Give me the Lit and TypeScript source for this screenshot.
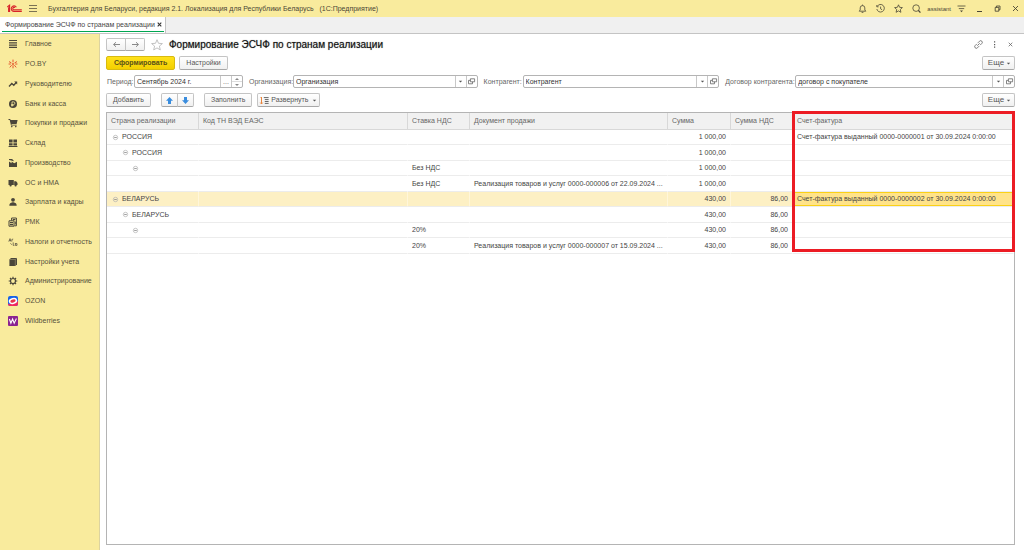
import { LitElement, html, svg, css, nothing } from "lit";
import { customElement, property } from "lit/decorators.js";

const icons: Record<string, unknown> = {
  logo: svg`<g fill="none" stroke="#d8232a" stroke-width="1.1"><path d="M.3 3 2.6 1.2V8M1.6 3.2V8" /><path d="M9.4 3.2A2.8 2.8 0 1 0 6.8 7.5H14.8M8 3.7A1.3 1.3 0 1 0 6.8 5.9H14.8" /></g>`,
  menu: svg`<path d="M0 1.5h8M0 4.5h8M0 7.5h8" stroke="#7a7254" stroke-width="1" />`,
  bell: svg`<path d="M1.2 7.2 2.2 6V3.9a2.3 2.3 0 0 1 4.6 0V6l1 1.2zM4.5 1.6V.6M3.6 8.4h1.8" fill="none" stroke="#4a4636" stroke-width=".8" />`,
  history: svg`<path d="M1.2 2.4A3.8 3.8 0 1 1 .8 5M.8 1v1.8h1.8M4.6 2.6v2.2l1.5 1" fill="none" stroke="#4a4636" stroke-width=".8" />`,
  star: svg`<path d="M4.5.8 5.6 3.3l2.8.3-2.1 1.9.6 2.8-2.4-1.4-2.4 1.4.6-2.8L.6 3.6l2.8-.3z" fill="none" stroke="#4a4636" stroke-width=".8" />`,
  search: svg`<circle cx="4.1" cy="4.1" r="3.3" fill="none" stroke="#4a4636" stroke-width=".8" /><path d="M6.4 6.4 8.4 8.6" stroke="#4a4636" stroke-width="1.3" />`,
  filter: svg`<path d="M.5 2h8M1.8 4.6h5.4" stroke="#4a4636" stroke-width=".8" /><path d="M3 6.6h3L4.5 8.2z" fill="#4a4636" />`,
  minimize: svg`<path d="M2 7.5h5" stroke="#4a4636" stroke-width="1" />`,
  restore: svg`<path d="M2.2 3.4h3.6v3.8H2.2zM3.4 3.4V2H7v3.8H5.8" fill="none" stroke="#3d3a2d" stroke-width=".8" />`,
  close: svg`<path d="m2 2 5 5M7 2 2 7" stroke="#4a4636" stroke-width=".9" />`,
  closeBold: svg`<path d="m2.7 2.7 3.6 3.6M6.3 2.7 2.7 6.3" stroke="#333" stroke-width="1.1" />`,
  closeSmall: svg`<path d="m2.7 2.7 3.6 3.6M6.3 2.7 2.7 6.3" stroke="#666" stroke-width=".8" />`,
  link: svg`<g transform="rotate(-45 4.5 4.5)" fill="none" stroke="#666" stroke-width=".8"><path d="M3.8 2.9H1.4a1.6 1.6 0 0 0 0 3.2h2.4M5.2 2.9h2.4a1.6 1.6 0 0 1 0 3.2H5.2M2.8 4.5h3.4" /></g>`,
  dots: svg`<path d="M4 1.3h1.2v1.3H4zM4 3.9h1.2v1.3H4zM4 6.5h1.2v1.3H4z" fill="#555" />`,
  left: svg`<path d="M8 4.5H1.6M4 2.2 1.6 4.5 4 6.8" fill="none" stroke="#888" stroke-width="1" />`,
  right: svg`<path d="M1 4.5h6.4M5 2.2l2.4 2.3L5 6.8" fill="none" stroke="#888" stroke-width="1" />`,
  favorite: svg`<path d="M6 .7 7.5 4.3l3.9.3-3 2.5.9 3.8L6 8.9l-3.3 2 .9-3.8-3-2.5 3.9-.3z" fill="none" stroke="#b4b4b4" stroke-width=".8" />`,
  up: svg`<path d="M4.5 1 8 4.7H6V8H3V4.7H1z" fill="#3a8dde" />`,
  down: svg`<path d="M4.5 8 1 4.3h2V1h3v3.3h2z" fill="#3a8dde" />`,
  expand: svg`<path d="M1.5 1v7M.3 6.6 1.5 8l1.2-1.4M.6 2 1.5 1" stroke="#e8843c" stroke-width="1" fill="none" /><path d="M3.8 1.6h4.8M4.8 3.6h3.8M4.8 5.5h3.8M4.8 7.4h3.8" stroke="#666" stroke-width="1" />`,
  caret: svg`<path d="M2.8 3.7h3.4L4.5 5.6z" fill="#555" />`,
  open: svg`<path d="M3.4 1.8h4.2v3H3.4zM3.4 3.4H1.5v3.4h4V4.8" fill="none" stroke="#666" stroke-width=".8" />`,
  minus: svg`<circle cx="4.5" cy="4.5" r="2.2" fill="none" stroke="#b0b0b0" stroke-width=".7" /><path d="M3.2 4.5h2.6" stroke="#888" stroke-width=".8" />`,
  main: svg`<path d="M1 1.5h8M1 3.8h8M1 6.1h8M1 8.4h8" stroke="#4a463a" stroke-width="1.2" />`,
  poby: svg`<path d="M5 .6v2.7M5 6.3v3M1 2.6l2.4 1.3M6.6 3.9 9 2.6M.6 5h2.2M7.2 5h2.2M3.6 6.2 1.8 8.4M6.4 6.2l1.8 2.2" stroke="#e4572e" stroke-width="1" /><circle cx="5" cy="5" r="1" fill="#e4572e" />`,
  trend: svg`<path d="m1 7.5 2.8-3 2 1.8 2.6-3" fill="none" stroke="#4a463a" stroke-width="1.3" /><path d="M6.2 2.4h3v3z" fill="#4a463a" />`,
  bank: svg`<circle cx="5" cy="5" r="4" fill="#4a463a" /><path d="M4 7.6V2.9h1.6a1.3 1.3 0 0 1 0 2.6H3.2M3.2 6.5h2.4" fill="none" stroke="#f9eb9d" stroke-width=".8" />`,
  cart: svg`<path d="M.5 1h1.7l.4 1h7L8.6 6H3.4l.3.8h5v.8H3L1.7 1.9H.5z" fill="#4a463a" /><circle cx="3.8" cy="8.6" r=".8" fill="#4a463a" /><circle cx="7.8" cy="8.6" r=".8" fill="#4a463a" />`,
  store: svg`<path d="M1 1.4h3.6v3H1zM5.4 1.4H9v3H5.4zM1 5.2h3.6v2.4H1zM5.4 5.2H9v2.4H5.4zM.6 8h8.8v.9H.6z" fill="#4a463a" />`,
  factory: svg`<path d="M1 9V3.4l2.6 1.8V3.6l2.6 1.6L9 3.8V9zM1 2V.9h3.6V2l1 .2v1L3.2 2.4z" fill="#4a463a" />`,
  truck: svg`<path d="M.5 2h5.3v5H.5zM6.2 3.2h1.9L9.5 5v2H6.2z" fill="#4a463a" /><circle cx="2.6" cy="7.5" r="1.1" fill="#4a463a" /><circle cx="7.6" cy="7.5" r="1.1" fill="#4a463a" />`,
  person: svg`<circle cx="5" cy="2.8" r="1.9" fill="#4a463a" /><path d="M1.3 8.8c0-2.4 1.3-3.1 3.1-3.5h1.2c1.8.4 3.1 1.1 3.1 3.5z" fill="#4a463a" />`,
  pos: svg`<path d="M1 3.8h5v5.4H1zM3.6 3.6V1h4.8v7.8H6.4" fill="none" stroke="#4a463a" stroke-width="1" /><path d="M2 5h3v1H2zM2 6.8h3v1.4H2zM4.8 2h2.6v1.3H4.8zM6.8 4.4h1v3h-1z" fill="#4a463a" />`,
  tax: svg`<path d="m.8 4.6 1.2-3 1 3M1.2 3.6h1.6M3.9 4.4v-2l1.3-.3M5.2 5.4v3h1.2M7.4 6v2.4H9V6.6H7.4M2.4 6.4l1.4 1.2" fill="none" stroke="#5c5644" stroke-width=".8" />`,
  books: svg`<path d="M1.4 2.4 3 .9h6v6.3L7.4 9h-6z" fill="#4a463a" /><path d="M1.6 2.5h5.7V9M7.3 2.5 8.9 1" fill="none" stroke="#a39b74" stroke-width=".6" />`,
  gear: svg`<circle cx="5" cy="5" r="2.5" fill="none" stroke="#4a463a" stroke-width="1.2" /><path d="M5 .7v1.6M5 7.7v1.6M.7 5h1.6M7.7 5h1.6M2 2l1 1M7 7l1 1M2 8l1-1M7 3l1-1" stroke="#4a463a" stroke-width="1.2" />`,
  ozon: svg`<rect width="10" height="10" rx="2" fill="#1762e8" /><path d="M0 7.4C3 9 8 7 10 5v3a2 2 0 0 1-2 2H2a2 2 0 0 1-2-2z" fill="#f0285f" /><ellipse cx="5" cy="5" rx="4.3" ry="3" transform="rotate(-14 5 5)" fill="#fff" /><ellipse cx="5" cy="5" rx="2.7" ry="1.5" transform="rotate(-14 5 5)" fill="#e8334a" />`,
  wb: svg`<rect width="10" height="10" rx="1" fill="#8b2391" /><path d="m1.4 3 1.5 4.2L4.6 3l1.6 4.2L8.4 2.6" fill="none" stroke="#fff" stroke-width="1.1" />`,
};

const boxes: Record<string, string> = { logo: "0 0 15 9", favorite: "0 0 12 12" };
const wide = ["main", "poby", "trend", "bank", "cart", "store", "factory", "truck", "person", "pos", "tax", "books", "gear", "ozon", "wb"];

const icon = (name: string) => html`<svg
  class="icon i-${name}"
  viewBox=${boxes[name] ?? (wide.includes(name) ? "0 0 10 10" : "0 0 9 9")}
  aria-hidden="true"
>${icons[name]}</svg>`;

const shared = css`
  :host { display: block; }
  * { box-sizing: border-box; }
  .icon { display: block; width: 9px; height: 9px; flex: none; overflow: visible; }
  .i-logo { width: 15px; }
  .i-favorite { width: 12px; height: 12px; }
  button, input {
    font: inherit;
    color: inherit;
    margin: 0;
    padding: 0;
    border: 0;
    background: none;
  }
  button { display: flex; align-items: center; justify-content: center; white-space: nowrap; }
`;

@customElement("lookup-field")
class LookupField extends LitElement {
  @property() label = "";
  @property() value = "";
  @property() kind = "lookup";

  static styles = [shared, css`
    :host { display: contents; }
    .label { color: #666; white-space: nowrap; padding-left: 6px; }
    .label.period { padding-left: 1px; }
    .box {
      display: flex;
      height: 13px;
      min-width: 0;
      border: 1px solid #b4b4b4;
      border-radius: 2px;
      background: #fff;
      color: #333;
    }
    .input { flex: 1; min-width: 0; padding-left: 2px; outline: 0; }
    .part { width: 11px; border-left: 1px solid #c8c8c8; color: #666; }
    .spin .step { height: 5px; width: 10px; }
    .spin .step + .step { height: 6px; border-top: 1px solid #ddd; }
  `];

  render() {
    return html`
      <label class="label ${this.kind}" for="field">${this.label}</label>
      <div class="box">
        <input class="input" id="field" .value=${this.value} />
        ${this.kind === "period"
          ? html`<button class="part" aria-label="Выбрать период">...</button>
              <div class="part spin">
                <button class="step" aria-label="Больше"><svg width="4" height="2" viewBox="0 0 4 2"><path d="M0 2h4L2 0z" fill="#888" /></svg></button>
                <button class="step" aria-label="Меньше"><svg width="4" height="2" viewBox="0 0 4 2"><path d="M0 0h4L2 2z" fill="#888" /></svg></button>
              </div>`
          : html`<button class="part" aria-label="Список">${icon("caret")}</button>
              <button class="part" aria-label="Открыть">${icon("open")}</button>`}
      </div>`;
  }
}

const sections = [
  ["main", "Главное"], ["poby", "PO.BY"], ["trend", "Руководителю"], ["bank", "Банк и касса"],
  ["cart", "Покупки и продажи"], ["store", "Склад"], ["factory", "Производство"], ["truck", "ОС и НМА"],
  ["person", "Зарплата и кадры"], ["pos", "РМК"], ["tax", "Налоги и отчетность"],
  ["books", "Настройки учета"], ["gear", "Администрирование"], ["ozon", "OZON"], ["wb", "Wildberries"],
];

const columns = ["Страна реализации", "Код ТН ВЭД ЕАЭС", "Ставка НДС", "Документ продажи", "Сумма", "Сумма НДС", "Счет-фактура"];

interface Row {
  level: number;
  country?: string;
  rate?: string;
  doc?: string;
  sum: string;
  vat?: string;
  invoice?: string;
  selected?: boolean;
}

const rows: Row[] = [
  { level: 1, country: "РОССИЯ", sum: "1 000,00", invoice: "Счет-фактура выданный 0000-0000001 от 30.09.2024 0:00:00" },
  { level: 2, country: "РОССИЯ", sum: "1 000,00" },
  { level: 3, rate: "Без НДС", sum: "1 000,00" },
  { level: 0, rate: "Без НДС", doc: "Реализация товаров и услуг 0000-000006 от 22.09.2024 ...", sum: "1 000,00" },
  { level: 1, country: "БЕЛАРУСЬ", sum: "430,00", vat: "86,00", invoice: "Счет-фактура выданный 0000-0000002 от 30.09.2024 0:00:00", selected: true },
  { level: 2, country: "БЕЛАРУСЬ", sum: "430,00", vat: "86,00" },
  { level: 3, rate: "20%", sum: "430,00", vat: "86,00" },
  { level: 0, rate: "20%", doc: "Реализация товаров и услуг 0000-000007 от 15.09.2024 ...", sum: "430,00", vat: "86,00" },
];

@customElement("app-root")
class AppRoot extends LitElement {
  static styles = [shared, css`
    :host {
      display: flex;
      flex-direction: column;
      height: 100vh;
      font: 7px/10px "Liberation Sans", Arial, sans-serif;
      color: #444;
      background: #fff;
    }
    .titlebar {
      display: flex;
      align-items: center;
      height: 17px;
      padding: 0 4px 0 7px;
      background: #f9eb9d;
      color: #4a4636;
    }
    .apptitle { margin-left: 10px; flex: 1; white-space: pre; }
    .menu { margin-left: 7px; }
    .tools { display: flex; align-items: center; gap: 9px; }
    .user { font-size: 6px; margin: 0 -3px; }
    .tabs { display: flex; height: 17px; background: #f0f0f0; border-bottom: 1px solid #c4c4c4; }
    .tab {
      display: flex;
      align-items: flex-start;
      padding: 0 1px 0 2px;
      background: #fff;
      border-right: 1px solid #c4c4c4;
    }
    .tabname {
      display: flex;
      align-items: center;
      height: 15px;
      padding: 1px 0 0 3px;
      border-bottom: 1px solid #00a651;
    }
    .body { display: flex; flex: 1; min-height: 0; }
    .nav { flex: none; width: 100px; background: #f9eb9d; border-right: 1px solid #dcd3a0; }
    .list { list-style: none; margin: 0; padding: 0; }
    .item { height: 20px; }
    .item:nth-child(4n) { height: 19px; }
    .section {
      display: flex;
      align-items: center;
      gap: 7px;
      height: 100%;
      padding-left: 8px;
      color: #57513c;
      text-decoration: none;
      white-space: nowrap;
    }
    .section .icon { width: 10px; height: 10px; }
    .page {
      flex: 1;
      min-width: 0;
      display: flex;
      flex-direction: column;
      gap: 5px;
      padding: 4px 9px 5px 6px;
    }
    .row { display: flex; align-items: center; height: 14px; }
    .top { height: 13px; }
    .top .btn { height: 13px; }
    .btn {
      height: 14px;
      padding: 0 6px;
      border: 1px solid #c4c4c4;
      border-bottom-color: #a8a8a8;
      border-radius: 2px;
      background: linear-gradient(#fff, #f0f0f0);
      color: #555;
    }
    .primary {
      padding: 0 7px;
      margin-right: 4px;
      background: linear-gradient(#ffe11a, #f3cf00);
      border-color: #d8ba10;
      color: #5a5018;
      font-weight: bold;
    }
    .pair { display: flex; }
    .pair .btn { width: 20px; padding: 0; border-radius: 2px 0 0 2px; }
    .pair .btn + .btn { margin-left: -1px; border-radius: 0 2px 2px 0; }
    .heading {
      margin: 0 0 0 6px;
      font-size: 10px;
      font-weight: normal;
      line-height: 13px;
      color: #111;
      text-shadow: 0 0 1px #777;
      white-space: nowrap;
    }
    .favorite { margin-left: 6px; }
    .spacer { flex: 1; }
    .pagetools { display: flex; gap: 7px; }
    .more { width: 33px; padding: 0 0 0 4px; font-size: 8px; }
    .fields {
      display: grid;
      grid-template-columns: 28px 109px 50px minmax(0, 184fr) 45px minmax(0, 196fr) 76px minmax(0, 219fr);
      align-items: center;
    }
    .commands .pair { margin: 0 10px; }
    .commands .pair .btn { width: 17px; }
    .expand { margin-left: 5px; padding: 0 0 0 2px; gap: 2px; }
    .tablewrap { position: relative; flex: 1; border: 1px solid #b4b4b4; }
    .frame {
      position: absolute;
      top: -2px;
      left: 685px;
      right: -1px;
      height: 141px;
      border: 3px solid #ec1c24;
      pointer-events: none;
    }
    .table { width: 100%; border-collapse: separate; border-spacing: 0; table-layout: fixed; }
    .country { width: 92px; }
    .code { width: 209px; }
    .rate { width: 62px; }
    .doc { width: 198px; }
    .sum { width: 63px; }
    .vat { width: 62px; }
    .th {
      height: 17px;
      padding: 0 4px;
      text-align: left;
      font-weight: normal;
      color: #666;
      background: #f1f1f1;
      border-right: 1px solid #d8d8d8;
      border-bottom: 1px solid #d8d8d8;
      white-space: nowrap;
    }
    .td {
      height: 15px;
      padding: 0 4px;
      border-right: 1px solid transparent;
      border-bottom: 1px solid #ececec;
      white-space: nowrap;
      overflow: hidden;
    }
    .tr:nth-child(even) .td { height: 16px; }
    .selected .td { background: #fdf0c4; border-right-color: #fff6da; }
    .selected .td:last-child { background: #ffe38a; box-shadow: inset 0 0 0 1px #fbd116; }
    .num { text-align: right; }
    .node { display: flex; align-items: center; gap: 2px; }
    .l2 { padding-left: 10px; }
    .l3 { padding-left: 20px; }
    .toggle { width: 9px; height: 9px; }
  `];

  render() {
    return html`
      <header class="titlebar">
        ${icon("logo")}
        <button class="menu" aria-label="Меню">${icon("menu")}</button>
        <span class="apptitle">Бухгалтерия для Беларуси, редакция 2.1. Локализация для Республики Беларусь   (1С:Предприятие)</span>
        <div class="tools">
          <button aria-label="Уведомления">${icon("bell")}</button>
          <button aria-label="История">${icon("history")}</button>
          <button aria-label="Избранное">${icon("star")}</button>
          <button aria-label="Поиск">${icon("search")}</button>
          <span class="user">assistant</span>
          <button aria-label="Настройки">${icon("filter")}</button>
          <button aria-label="Свернуть">${icon("minimize")}</button>
          <button aria-label="Восстановить">${icon("restore")}</button>
          <button aria-label="Закрыть">${icon("close")}</button>
        </div>
      </header>
      <div class="tabs">
        <div class="tab">
          <div class="tabname">
            <span>Формирование ЭСЧФ по странам реализации</span>
            <button aria-label="Закрыть вкладку">${icon("closeBold")}</button>
          </div>
        </div>
      </div>
      <div class="body">
        <nav class="nav">
          <ul class="list">
            ${sections.map(([name, text]) => html`<li class="item"><a class="section" href="#">${icon(name)}${text}</a></li>`)}
          </ul>
        </nav>
        <main class="page">
          <div class="row top">
            <div class="pair">
              <button class="btn" aria-label="Назад">${icon("left")}</button>
              <button class="btn" aria-label="Вперед">${icon("right")}</button>
            </div>
            <button class="favorite" aria-label="В избранное">${icon("favorite")}</button>
            <h1 class="heading">Формирование ЭСЧФ по странам реализации</h1>
            <span class="spacer"></span>
            <div class="pagetools">
              <button aria-label="Ссылка">${icon("link")}</button>
              <button aria-label="Действия">${icon("dots")}</button>
              <button aria-label="Закрыть форму">${icon("closeSmall")}</button>
            </div>
          </div>
          <div class="row">
            <button class="btn primary">Сформировать</button>
            <button class="btn">Настройки</button>
            <span class="spacer"></span>
            <button class="btn more">Еще${icon("caret")}</button>
          </div>
          <div class="fields">
            <lookup-field label="Период:" value="Сентябрь 2024 г." kind="period"></lookup-field>
            <lookup-field label="Организация:" value="Организация"></lookup-field>
            <lookup-field label="Контрагент:" value="Контрагент"></lookup-field>
            <lookup-field label="Договор контрагента:" value="договор с покупателе"></lookup-field>
          </div>
          <div class="row commands">
            <button class="btn">Добавить</button>
            <div class="pair">
              <button class="btn" aria-label="Вверх">${icon("up")}</button>
              <button class="btn" aria-label="Вниз">${icon("down")}</button>
            </div>
            <button class="btn">Заполнить</button>
            <button class="btn expand">${icon("expand")}Развернуть${icon("caret")}</button>
            <span class="spacer"></span>
            <button class="btn more">Еще${icon("caret")}</button>
          </div>
          <div class="tablewrap">
            <table class="table">
              <colgroup>
                <col class="country" /><col class="code" /><col class="rate" /><col class="doc" /><col class="sum" /><col class="vat" /><col />
              </colgroup>
              <thead>
                <tr>${columns.map((c) => html`<th class="th" scope="col">${c}</th>`)}</tr>
              </thead>
              <tbody>
                ${rows.map((r) => html`
                  <tr class="tr ${r.selected ? "selected" : ""}">
                    <td class="td">
                      ${r.level
                        ? html`<div class="node l${r.level}"><button class="toggle" aria-label="Свернуть группу">${icon("minus")}</button>${r.country ?? nothing}</div>`
                        : nothing}
                    </td>
                    <td class="td"></td>
                    <td class="td">${r.rate}</td>
                    <td class="td">${r.doc}</td>
                    <td class="td num">${r.sum}</td>
                    <td class="td num">${r.vat}</td>
                    <td class="td">${r.invoice}</td>
                  </tr>`)}
              </tbody>
            </table>
            <div class="frame"></div>
          </div>
        </main>
      </div>`;
  }
}
